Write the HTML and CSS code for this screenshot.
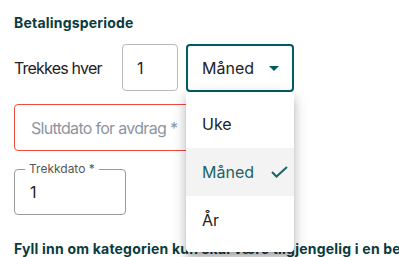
FILE: index.html
```html
<!DOCTYPE html>
<html lang="nb">
<head>
<meta charset="utf-8">
<link rel="stylesheet" href="styles.css">
</head>
<body>
<div class="page">
  <h2 class="heading">Betalingsperiode</h2>
  <div class="row">
    <span class="row-label">Trekkes hver</span>
    <div class="num-input">1</div>
    <div class="select-wrap">
      <div class="select">
        <span>Måned</span>
        <svg class="arrow" width="10" height="5" viewBox="0 0 10 5"><path d="M0 0 L5 5 L10 0 Z" fill="#005c61"/></svg>
      </div>
      <ul class="menu">
        <li class="item">Uke</li>
        <li class="item selected">Måned
          <svg class="check" width="17" height="12" viewBox="0 0 17 12"><path d="M1 6 L5.5 10.5 L16 1" fill="none" stroke="#1b6467" stroke-width="2"/></svg>
        </li>
        <li class="item">År</li>
      </ul>
    </div>
  </div>
  <div class="error-field">Sluttdato for avdrag *</div>
  <div class="outlined">
    <span class="float-label">Trekkdato *</span>
    <span class="value">1</span>
  </div>
  <p class="hint">Fyll inn om kategorien kun skal være tilgjengelig i en bestemt periode</p>
</div>
</body>
</html>
```
FILE: styles.css
```css
* { box-sizing: border-box; }
html, body { margin: 0; padding: 0; background: #fff; }
body {
  font-family: Inter, "Noto Sans", sans-serif;
  color: #222;
  overflow: hidden;
  width: 399px;
  height: 257px;
}
.page {
  padding: 13px 0 0 14px;
  display: flex;
  flex-direction: column;
  align-items: flex-start;
}
.heading {
  margin: 0;
  font-size: 14px;
  line-height: 20px;
  font-weight: 700;
  letter-spacing: 0.2px;
  color: #0b3b3e;
}
.row {
  margin-top: 11px;
  display: flex;
  align-items: flex-start;
}
.row-label {
  width: 108px;
  height: 47px;
  display: flex;
  align-items: center;
  font-size: 16px;
  letter-spacing: -0.8px;
  color: #222;
}
.num-input {
  width: 56px;
  height: 47px;
  border: 1px solid #b8b8b8;
  border-radius: 4px;
  padding-left: 14px;
  display: flex;
  align-items: center;
  font-size: 16px;
}
.select-wrap {
  position: relative;
  margin-left: 8px;
}
.select {
  width: 108px;
  height: 48px;
  border: 2px solid #005c61;
  border-radius: 4px;
  padding: 0 13px 0 14px;
  display: flex;
  align-items: center;
  justify-content: space-between;
  font-size: 16px;
  color: #222;
}
.arrow { margin-top: 1px; }
.menu {
  position: absolute;
  left: 0;
  top: 48px;
  width: 108px;
  margin: 0;
  padding: 8px 0;
  list-style: none;
  background: #fff;
  border-radius: 4px;
  box-shadow: 0 5px 5px -3px rgba(0,0,0,0.2), 0 8px 10px 1px rgba(0,0,0,0.14), 0 3px 14px 2px rgba(0,0,0,0.12);
  z-index: 5;
}
.item {
  height: 48px;
  padding: 0 6px 0 16px;
  display: flex;
  align-items: center;
  justify-content: space-between;
  font-size: 16px;
  color: #222;
}
.item.selected {
  background: #f3f3f3;
  color: #1b6467;
}
.error-field {
  margin-top: 12px;
  width: 260px;
  height: 47px;
  border: 1px solid #ef4b3f;
  border-radius: 4px;
  padding-left: 16px;
  display: flex;
  align-items: center;
  font-size: 16px;
  color: #8d95a2;
  letter-spacing: -0.7px;
}
.outlined {
  position: relative;
  margin-top: 18px;
  width: 112px;
  height: 46px;
  border: 1px solid #9a9a9a;
  border-radius: 4px;
  padding-left: 15px;
  display: flex;
  align-items: center;
  font-size: 16px;
}
.float-label {
  position: absolute;
  left: 10px;
  top: -8px;
  padding: 0 4px;
  background: #fff;
  font-size: 12px;
  line-height: 14px;
  color: #555;
}
.hint {
  margin: 24px 0 0;
  font-size: 14px;
  line-height: 20px;
  font-weight: 700;
  letter-spacing: 0.2px;
  color: #0b3b3e;
  white-space: nowrap;
}
```
